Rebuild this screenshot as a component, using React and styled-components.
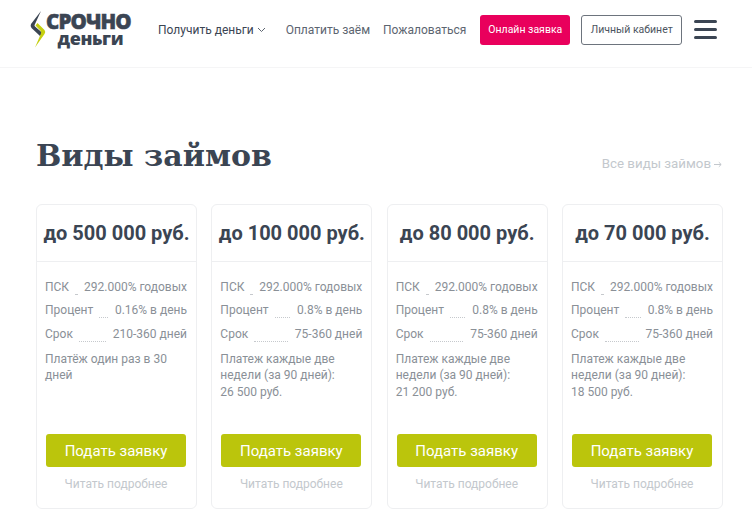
import React from "react";
import styled, { createGlobalStyle } from "styled-components";

const GlobalStyle = createGlobalStyle`
  html, body {
    margin: 0;
    padding: 0;
    background: #fff;
    font-family: Roboto, "Liberation Sans", sans-serif;
    overflow: hidden;
  }
  * { box-sizing: border-box; }
`;

const Header = styled.header`
  height: 68px;
  border-bottom: 1px solid #f5f5f6;
  display: flex;
  align-items: center;
  padding: 0 30px 8px 30px;
`;
const Logo = styled.a`
  display: flex;
  align-items: center;
  flex: none;
  width: 128px;
  color: #3b4553;
`;
const LogoText = styled.div`
  display: flex;
  flex-direction: column;
  align-items: center;
  font-family: "Open Sans", "Liberation Sans", sans-serif;
  font-weight: 800;
`;
const LogoTop = styled.span`
  font-size: 20.5px;
  letter-spacing: -0.9px;
  -webkit-text-stroke: 0.5px #3b4553;
  height: 18px;
  line-height: 18px;
`;
const LogoBottom = styled.span`
  font-size: 18px;
  letter-spacing: -0.4px;
  height: 17px;
  line-height: 17px;
  margin-left: 4px;
  text-transform: lowercase;
`;
const Nav = styled.nav`
  display: flex;
  align-items: center;
  font-size: 12px;
  line-height: 16px;
`;
const NavLink = styled.a`
  color: ${(p) => (p.$dark ? "#3b4553" : "#5c6570")};
  margin-right: ${(p) => p.$gap}px;
  display: flex;
  align-items: center;
  gap: 3px;
  white-space: nowrap;
`;
const Cta = styled.a`
  height: 30px;
  border-radius: 3px;
  display: flex;
  align-items: center;
  justify-content: center;
  font-size: 10.5px;
  white-space: nowrap;
  flex: none;
  width: ${(p) => p.$width}px;
  margin-right: ${(p) => p.$gap}px;
  color: ${(p) => (p.$outline ? "#4c5560" : "#fff")};
  background: ${(p) => (p.$outline ? "#fff" : "#e9005c")};
  border: ${(p) => (p.$outline ? "1px solid #6d747d" : "none")};
`;
const Burger = styled.div`
  width: 23px;
  flex: none;
  display: flex;
  flex-direction: column;
  gap: 5px;
  span {
    height: 3px;
    border-radius: 2px;
    background: #3b4553;
  }
`;
const Main = styled.main`
  padding: 0 30px 0 36px;
`;
const TitleRow = styled.div`
  display: flex;
  justify-content: space-between;
  align-items: flex-end;
  height: 136px;
  padding-bottom: 28px;
`;
const Title = styled.h1`
  margin: 0;
  font-family: "DejaVu Serif", serif;
  font-weight: 700;
  font-size: 30px;
  line-height: 40px;
  color: #3b4553;
`;
const AllLink = styled.a`
  display: flex;
  align-items: center;
  gap: 3px;
  font-size: 13.3px;
  line-height: 16px;
  color: #c3c8cd;
  margin-bottom: 4px;
`;
const Cards = styled.div`
  display: grid;
  grid-template-columns: repeat(4, 161px);
  column-gap: 14.33px;
`;
const Card = styled.article`
  height: 305px;
  border: 1px solid #eeeff1;
  border-radius: 6px;
  display: flex;
  flex-direction: column;
`;
const CardTitle = styled.h2`
  margin: 0;
  height: 57px;
  flex: none;
  border-bottom: 1px solid #eeeff1;
  display: flex;
  align-items: center;
  justify-content: center;
  font-size: 20px;
  font-weight: 700;
  color: #3b4553;
  white-space: nowrap;
`;
const CardBody = styled.div`
  flex: 1;
  padding: 13px 9px 0 8px;
  font-size: 12px;
  color: #8a9097;
`;
const Row = styled.div`
  display: flex;
  align-items: flex-end;
  height: 23.5px;
  line-height: 23px;
  white-space: nowrap;
`;
const Leader = styled.i`
  flex: 1;
  margin: 0 7px 4px 6px;
  border-bottom: 1px dotted #c6c9cd;
`;
const Note = styled.p`
  margin: 5px 0 0;
  line-height: 16.5px;
`;
const CardFooter = styled.div`
  flex: none;
  padding: 0 10px 16px 9px;
  display: flex;
  flex-direction: column;
  align-items: center;
`;
const Apply = styled.a`
  width: 100%;
  height: 33px;
  border-radius: 3px;
  background: #bbc50c;
  color: #fff;
  font-size: 15px;
  display: flex;
  align-items: center;
  justify-content: center;
`;
const More = styled.a`
  margin-top: 9px;
  font-size: 12px;
  line-height: 16px;
  color: #c3c8cd;
`;

const loans = [
  { title: "до 500 000 руб.", rate: "0.16% в день", term: "210-360 дней", note: ["Платёж один раз в 30 дней"] },
  { title: "до 100 000 руб.", rate: "0.8% в день", term: "75-360 дней", note: ["Платеж каждые две недели (за 90 дней):", "26 500 руб."] },
  { title: "до 80 000 руб.", rate: "0.8% в день", term: "75-360 дней", note: ["Платеж каждые две недели (за 90 дней):", "21 200 руб."] },
  { title: "до 70 000 руб.", rate: "0.8% в день", term: "75-360 дней", note: ["Платеж каждые две недели (за 90 дней):", "18 500 руб."] },
];

function LogoMark() {
  return (
    <svg width="16" height="37" viewBox="0 0 16 37" fill="none">
      <path d="M11 0 L1 13 Q0 15 1.5 17 L10 25 L12.5 22 L5 15.5 Q4 14.5 4.8 13.5 Z" fill="#3b4553" />
      <path d="M7.5 12 L14.5 19 Q16 21 14.5 23 L5 36.5 L10.8 23 Q11.8 21 10.3 19.5 L5.5 14.5 Z" fill="#c5cf10" />
    </svg>
  );
}

export default function App() {
  return (
    <>
      <GlobalStyle />
      <Header>
        <Logo>
          <LogoMark />
          <LogoText>
            <LogoTop>СРОЧНО</LogoTop>
            <LogoBottom>ДЕНЬГИ</LogoBottom>
          </LogoText>
        </Logo>
        <Nav>
          <NavLink $dark $gap={20}>
            Получить деньги
            <svg width="9" height="6" viewBox="0 0 9 6" fill="none">
              <path d="M1 1l3.5 3.5L8 1" stroke="#5c6570" strokeWidth="1" />
            </svg>
          </NavLink>
          <NavLink $gap={13}>Оплатить заём</NavLink>
          <NavLink $gap={14}>Пожаловаться</NavLink>
          <Cta $width={90} $gap={11}>Онлайн заявка</Cta>
          <Cta $outline $width={101} $gap={12}>Личный кабинет</Cta>
          <Burger>
            <span />
            <span />
            <span />
          </Burger>
        </Nav>
      </Header>
      <Main>
        <TitleRow>
          <Title>Виды займов</Title>
          <AllLink>
            Все виды займов
            <svg width="8" height="7" viewBox="0 0 8 7" fill="none">
              <path d="M0 3.5h7M4.8 1.2L7.2 3.5 4.8 5.8" stroke="#c3c8cd" strokeWidth="1" />
            </svg>
          </AllLink>
        </TitleRow>
        <Cards>
          {loans.map((loan) => (
            <Card key={loan.title}>
              <CardTitle>{loan.title}</CardTitle>
              <CardBody>
                <Row>ПСК<Leader />292.000% годовых</Row>
                <Row>Процент<Leader />{loan.rate}</Row>
                <Row>Срок<Leader />{loan.term}</Row>
                <Note>
                  {loan.note.map((line) => (
                    <React.Fragment key={line}>
                      {line}
                      <br />
                    </React.Fragment>
                  ))}
                </Note>
              </CardBody>
              <CardFooter>
                <Apply>Подать заявку</Apply>
                <More>Читать подробнее</More>
              </CardFooter>
            </Card>
          ))}
        </Cards>
      </Main>
    </>
  );
}
